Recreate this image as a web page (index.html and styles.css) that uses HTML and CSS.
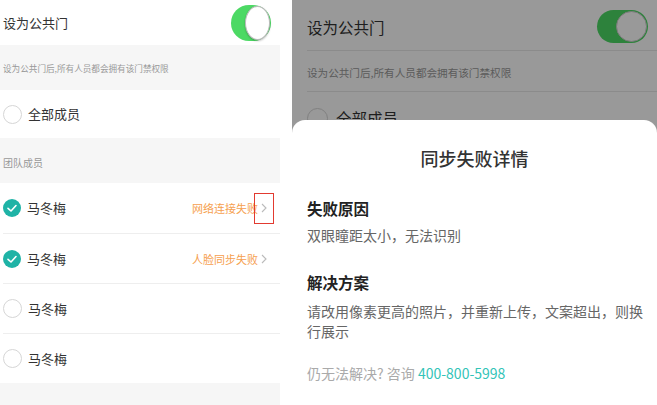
FILE: index.html
```html
<!DOCTYPE html>
<html lang="zh-CN">
<head>
<meta charset="utf-8">
<title>同步失败详情</title>
<link rel="stylesheet" href="styles.css">
</head>
<body>
<div class="page">
  <section class="left">
    <div class="row row-top">
      <span class="label">设为公共门</span>
      <span class="switch switch-l"><span class="knob"></span></span>
    </div>
    <div class="band band-desc">设为公共门后,所有人员都会拥有该门禁权限</div>
    <div class="row row-all">
      <span class="radio"></span>
      <span class="label">全部成员</span>
    </div>
    <div class="band band-team">团队成员</div>
    <div class="member">
      <span class="check"><svg viewBox="0 0 18 18" width="18" height="18"><circle cx="9" cy="9" r="9" fill="#1fb3a6"/><polyline points="5,9.3 8,12 13,6.5" fill="none" stroke="#fff" stroke-width="1.6" stroke-linecap="round" stroke-linejoin="round"/></svg></span>
      <span class="label">马冬梅</span>
      <span class="status">网络连接失败</span>
      <span class="chev chev-mark"><svg viewBox="0 0 6 10" width="6" height="10"><polyline points="1,1 5,5 1,9" fill="none" stroke="#bbb" stroke-width="1.1"/></svg></span>
    </div>
    <div class="member">
      <span class="check"><svg viewBox="0 0 18 18" width="18" height="18"><circle cx="9" cy="9" r="9" fill="#1fb3a6"/><polyline points="5,9.3 8,12 13,6.5" fill="none" stroke="#fff" stroke-width="1.6" stroke-linecap="round" stroke-linejoin="round"/></svg></span>
      <span class="label">马冬梅</span>
      <span class="status">人脸同步失败</span>
      <span class="chev"><svg viewBox="0 0 6 10" width="6" height="10"><polyline points="1,1 5,5 1,9" fill="none" stroke="#bbb" stroke-width="1.1"/></svg></span>
    </div>
    <div class="member">
      <span class="radio"></span>
      <span class="label">马冬梅</span>
    </div>
    <div class="member">
      <span class="radio"></span>
      <span class="label">马冬梅</span>
    </div>
    <div class="band band-end"></div>
  </section>

  <section class="right">
    <div class="under">
      <div class="urow urow-top">
        <span class="ulabel">设为公共门</span>
        <span class="switch switch-r"><span class="knob"></span></span>
      </div>
      <div class="urow urow-desc">设为公共门后,所有人员都会拥有该门禁权限</div>
      <div class="urow urow-all">
        <span class="uradio"></span>
        <span class="ulabel">全部成员</span>
      </div>
    </div>
    <div class="sheet">
      <h2 class="sheet-title">同步失败详情</h2>
      <h3 class="sec-title">失败原因</h3>
      <p class="sec-text">双眼瞳距太小，无法识别</p>
      <h3 class="sec-title sec-title-2">解决方案</h3>
      <p class="sec-text sec-text-2">请改用像素更高的照片，并重新上传，文案超出，则换行展示</p>
      <p class="help">仍无法解决? 咨询 <span class="phone">400-800-5998</span></p>
    </div>
  </section>
</div>
</body>
</html>
```

FILE: styles.css
```css
* { box-sizing: border-box; }
html, body { margin: 0; padding: 0; background: #fff; }
body {
  font-family: "Noto Sans CJK SC", "Noto Sans", sans-serif;
  color: #333;
  width: 657px;
  height: 405px;
  overflow: hidden;
}
.page {
  display: flex;
  gap: 12px;
  height: 405px;
}

/* ---------- left panel ---------- */
.left {
  width: 280px;
  flex: none;
  display: flex;
  flex-direction: column;
  background: #fff;
}
.row {
  display: flex;
  align-items: center;
  padding: 0 9px 0 3px;
}
.label { font-size: 13px; line-height: 18px; color: #333; }
.row-top { height: 45px; justify-content: space-between; }
.row-all { height: 48px; gap: 6px; }
.band {
  background: #f6f6f6;
  color: #999;
  padding-left: 3px;
  display: flex;
  align-items: center;
}
.band-desc { height: 45px; font-size: 8.6px; }
.band-team { height: 45px; font-size: 10px; padding-top: 4px; }
.band-end { flex: 1; }

.member {
  height: 50px;
  display: flex;
  align-items: center;
  gap: 6px;
  margin-left: 3px;
  padding-right: 10px;
}
.member + .member { border-top: 1px solid #eee; }
.member .status {
  margin-left: auto;
  font-size: 11px;
  color: #f6a04e;
}
.check { width: 18px; height: 18px; display: flex; }
.radio {
  width: 19px;
  height: 19px;
  border-radius: 50%;
  border: 1px solid #d6d6d6;
  flex: none;
}
.chev {
  width: 12px;
  height: 20px;
  display: flex;
  align-items: center;
  justify-content: center;
  margin-left: -6px;
  position: relative;
}
.chev-mark::after {
  content: "";
  position: absolute;
  left: -4px;
  right: -4px;
  top: -5px;
  height: 29px;
  border: 1.5px solid #e23a30;
}

.switch {
  position: relative;
  background: #4cd964;
  flex: none;
}
.switch .knob {
  position: absolute;
  top: 1px;
  right: 1px;
  background: #fff;
  border-radius: 50%;
  box-shadow: 0 1px 2px rgba(0,0,0,0.25);
}
.switch-l { width: 40px; height: 36px; border-radius: 18px; }
.switch-l .knob { width: 25px; height: 34px; border: 1px solid #bbb; }

/* ---------- right panel ---------- */
.right {
  width: 365px;
  flex: none;
  display: flex;
  flex-direction: column;
  background: #999;
}
.under {
  height: 120px;
  overflow: hidden;
  background: #fff;
  position: relative;
  padding-left: 15px;
}
.under::after {
  content: "";
  position: absolute;
  inset: 0;
  background: rgba(0,0,0,0.4);
}
.urow { display: flex; align-items: center; padding-right: 9px; }
.urow-top { height: 51px; justify-content: space-between; border-bottom: 1px solid #e8e8e8; padding-top: 3px; }
.urow-desc { height: 41px; font-size: 10.6px; color: #999; border-bottom: 1px solid #e8e8e8; padding-top: 2px; }
.urow-all { height: 50px; gap: 8px; padding-top: 2px; }
.ulabel { font-size: 15.5px; color: #333; }
.uradio { width: 21px; height: 21px; border-radius: 50%; border: 1px solid #d6d6d6; }
.switch-r { width: 51px; height: 33px; border-radius: 17px; }
.switch-r .knob { width: 31px; height: 31px; border: 1px solid #ccc; box-shadow: none; }

.sheet {
  flex: 1;
  background: #fff;
  border-radius: 13px 13px 0 0;
  padding: 25px 4px 0 15px;
}
.sheet-title {
  margin: 0;
  text-align: center;
  font-size: 18px;
  line-height: 26px;
  font-weight: 500;
  color: #333;
  padding-right: 11px;
}
.sec-title {
  margin: 26px 0 0;
  font-size: 15.5px;
  line-height: 22px;
  font-weight: 700;
  color: #222;
}
.sec-text {
  margin: 6px 0 0;
  font-size: 14px;
  line-height: 20px;
  color: #666;
}
.sec-title-2 { margin-top: 26px; }
.sec-text-2 { margin-top: 8px; }
.help {
  margin: 22px 0 0;
  font-size: 14px;
  line-height: 20px;
  color: #aaa;
}
.phone { color: #33c4b8; }
```
